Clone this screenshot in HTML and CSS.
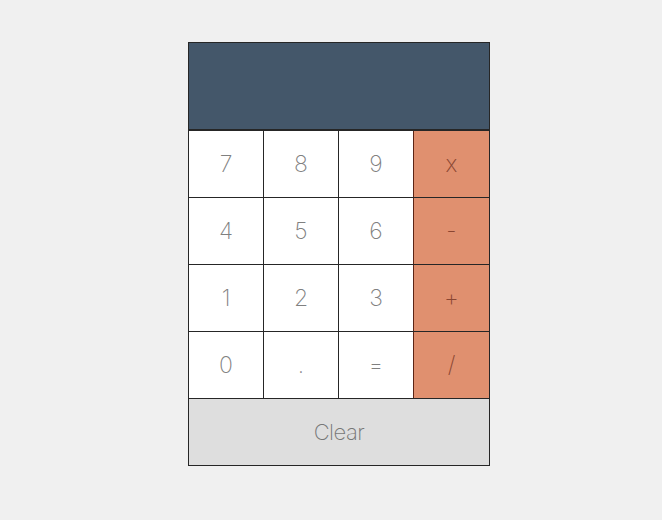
FILE: index.html
```html
<!DOCTYPE html>
<html>
<head>
<meta charset="utf-8">
<link rel="stylesheet" href="styles.css">
</head>
<body>
<div class="calc">
  <div class="display"></div>
  <div class="keys">
    <div class="key">7</div><div class="key">8</div><div class="key">9</div><div class="key op">x</div>
    <div class="key">4</div><div class="key">5</div><div class="key">6</div><div class="key op">-</div>
    <div class="key">1</div><div class="key">2</div><div class="key">3</div><div class="key op">+</div>
    <div class="key">0</div><div class="key">.</div><div class="key">=</div><div class="key op">/</div>
  </div>
  <div class="clear">Clear</div>
</div>
</body>
</html>
```
FILE: styles.css
```css
html, body { margin: 0; padding: 0; }
body {
  background: #f0f0f0;
  width: 662px;
  height: 520px;
  font-family: Inter, "Liberation Sans", sans-serif;
}
.calc {
  margin: 42px 0 0 188px;
  width: 300px;
  border: 1px solid #262626;
  background: #fff;
}
.display {
  height: 86px;
  background: #44576a;
  border-bottom: 2px solid #262626;
}
.keys {
  display: grid;
  grid-template-columns: 74px 74px 74px 75px;
  grid-auto-rows: 66px;
  column-gap: 1px;
  row-gap: 1px;
  background: #262626;
  border-bottom: 1px solid #262626;
}
.key {
  background: #fff;
  display: flex;
  align-items: center;
  justify-content: center;
  font-size: 23px;
  font-weight: 200;
  color: #808080;
}
.key.op {
  background: #e0906f;
  color: #8a4632;
  box-shadow: -1px 0 0 #5c2415;
}
.clear {
  height: 66px;
  background: #dedede;
  display: flex;
  align-items: center;
  justify-content: center;
  font-size: 22px;
  font-weight: 200;
  color: #777;
  letter-spacing: -0.5px;
}
```
